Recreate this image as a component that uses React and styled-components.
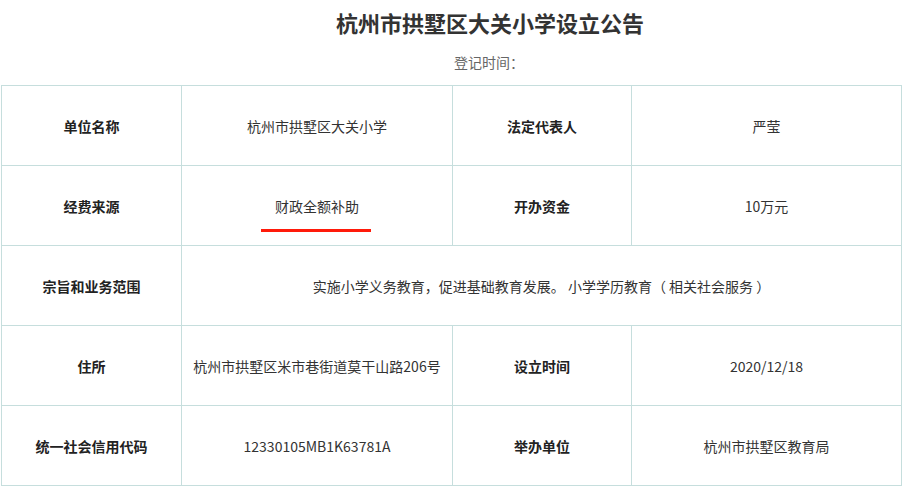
import React from 'react'
import styled, { createGlobalStyle } from 'styled-components'

const columns = [180, 271, 179, 270]

const rows = [
  [
    { label: '单位名称', value: '杭州市拱墅区大关小学' },
    { label: '法定代表人', value: '严莹' },
  ],
  [
    { label: '经费来源', value: '财政全额补助', marked: true },
    { label: '开办资金', value: '10万元' },
  ],
  [{ label: '宗旨和业务范围', value: '实施小学义务教育，促进基础教育发展。 小学学历教育（ 相关社会服务 ）', wide: true }],
  [
    { label: '住所', value: '杭州市拱墅区米市巷街道莫干山路206号' },
    { label: '设立时间', value: '2020/12/18' },
  ],
  [
    { label: '统一社会信用代码', value: '12330105MB1K63781A' },
    { label: '举办单位', value: '杭州市拱墅区教育局' },
  ],
]

export default () => {
  return (
    <>
      <GlobalStyle />
      <Page>
        <Title>杭州市拱墅区大关小学设立公告</Title>
        <Meta>登记时间：</Meta>
        <Table>
          <colgroup>
            {columns.map((w, i) => (
              <Col key={i} $width={w} />
            ))}
          </colgroup>
          <tbody>
            {rows.map((row, i) => (
              <tr key={i}>
                {row.map(cell => (
                  <React.Fragment key={cell.label}>
                    <Label>{cell.label}</Label>
                    <Value colSpan={cell.wide ? 3 : 1}>
                      {cell.marked ? <Marked>{cell.value}</Marked> : cell.value}
                    </Value>
                  </React.Fragment>
                ))}
              </tr>
            ))}
          </tbody>
        </Table>
      </Page>
    </>
  )
}

const GlobalStyle = createGlobalStyle`
  body {
    margin: 0;
    background: #fff;
    font-family: "Noto Sans CJK SC", "Noto Sans", sans-serif;
    color: #333;
  }
`

const Page = styled.div`
  padding: 6px 0 0 1px;
  width: 900px;
`

const Title = styled.h1`
  margin: 0;
  text-align: center;
  font-size: 22px;
  line-height: 32px;
  font-weight: 700;
  color: #333;
  padding-left: 78px;
`

const Meta = styled.p`
  margin: 8px 0 0;
  text-align: center;
  font-size: 14px;
  line-height: 32px;
  color: #666;
  padding-left: 76px;
`

const Table = styled.table`
  margin-top: 7px;
  width: 900px;
  border-collapse: collapse;
  table-layout: fixed;
  border: 1px solid #c6dedd;

  td {
    border: 1px solid #c6dedd;
    height: 79px;
    padding: 0 4px;
    text-align: center;
    font-size: 14px;
    line-height: 20px;
  }
`

const Col = styled.col`
  width: ${props => props.$width}px;
`

const Label = styled.td`
  font-weight: 700;
  color: #222;
`

const Value = styled.td`
  color: #333;
`

const Marked = styled.span`
  position: relative;
  display: inline-block;

  &::after {
    content: '';
    position: absolute;
    left: -14px;
    right: -12px;
    top: 33px;
    height: 3px;
    background: #ff1a0a;
  }
`
